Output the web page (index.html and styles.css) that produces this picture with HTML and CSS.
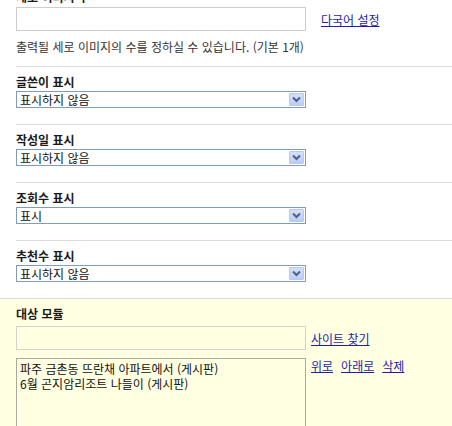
FILE: index.html
```html
<!DOCTYPE html>
<html lang="ko">
  <head>
    <meta charset="UTF-8" />
    <meta name="viewport" content="width=device-width, initial-scale=1.0" />
    <title>모듈 설정</title>
    <link rel="stylesheet" href="styles.css">
  </head>

  <body>
    <div class="options">
      <div class="row row-first">
        <div class="label">세로 이미지 수</div>
        <div class="field-line">
          <input type="text" class="text-input" />
          <a href="#" class="lang-link">다국어 설정</a>
        </div>
        <p class="desc">출력될 세로 이미지의 수를 정하실 수 있습니다. (기본 1개)</p>
      </div>

      <div class="row">
        <div class="label">글쓴이 표시</div>
        <div class="select-box">
          <span class="select-value">표시하지 않음</span>
          <span class="select-btn">
            <svg width="9" height="7" viewBox="0 0 9 7"><path d="M1 1.5 L4.5 5 L8 1.5" fill="none" stroke="#4d6185" stroke-width="2" /></svg>
          </span>
        </div>
      </div>

      <div class="row">
        <div class="label">작성일 표시</div>
        <div class="select-box">
          <span class="select-value">표시하지 않음</span>
          <span class="select-btn">
            <svg width="9" height="7" viewBox="0 0 9 7"><path d="M1 1.5 L4.5 5 L8 1.5" fill="none" stroke="#4d6185" stroke-width="2" /></svg>
          </span>
        </div>
      </div>

      <div class="row">
        <div class="label">조회수 표시</div>
        <div class="select-box">
          <span class="select-value">표시</span>
          <span class="select-btn">
            <svg width="9" height="7" viewBox="0 0 9 7"><path d="M1 1.5 L4.5 5 L8 1.5" fill="none" stroke="#4d6185" stroke-width="2" /></svg>
          </span>
        </div>
      </div>

      <div class="row">
        <div class="label">추천수 표시</div>
        <div class="select-box">
          <span class="select-value">표시하지 않음</span>
          <span class="select-btn">
            <svg width="9" height="7" viewBox="0 0 9 7"><path d="M1 1.5 L4.5 5 L8 1.5" fill="none" stroke="#4d6185" stroke-width="2" /></svg>
          </span>
        </div>
      </div>

      <!-- 대상 모듈 -->
      <div class="row row-module">
        <div class="label">대상 모듈</div>
        <div class="field-line">
          <input type="text" class="text-input module-input" />
          <a href="#" class="side-link">사이트 찾기</a>
        </div>
        <div class="module-list-line">
          <div class="module-list">
            <div>파주 금촌동 뜨란채 아파트에서 (게시판)</div>
            <div>6월 곤지암리조트 나들이 (게시판)</div>
          </div>
          <div class="list-actions">
            <a href="#">위로</a>
            <a href="#">아래로</a>
            <a href="#">삭제</a>
          </div>
        </div>
      </div>
    </div>
  </body>
</html>
```

FILE: styles.css
```css
body {
  margin: 0;
  background-color: #ffffff;
  font-family: "Noto Sans CJK KR", "Noto Sans", sans-serif;
  font-size: 12px;
  color: #222;
  overflow: hidden;
}

.options {
  margin-top: -10px;
}

.row {
  margin-left: 16px;
  padding: 8px 0 16px 0;
  border-top: 1px solid #dcdcdc;
}

.row-first {
  border-top: none;
  padding: 0 0 12px 0;
}

.label {
  font-weight: bold;
  line-height: 14px;
  height: 14px;
  color: #1a1a1a;
}

.row-first .label {
  margin-bottom: 3px;
}

.field-line {
  display: flex;
  align-items: center;
}

.text-input {
  box-sizing: border-box;
  width: 290px;
  height: 24px;
  margin: 0;
  border: 1px solid #cdcdcd;
  background-color: #fff;
  font-family: inherit;
  font-size: 12px;
}

a {
  color: #1d1da8;
  text-decoration: underline;
}

.lang-link {
  margin-left: 15px;
}

.desc {
  margin: 9px 0 0 0;
  line-height: 14px;
  color: #333;
}

.select-box {
  position: relative;
  box-sizing: border-box;
  width: 290px;
  height: 17px;
  margin-top: 2px;
  border: 1px solid #7f9db9;
  background-color: #fff;
}

.select-value {
  display: block;
  padding-left: 3px;
  line-height: 15px;
  color: #111;
}

.select-btn {
  position: absolute;
  top: 1px;
  right: 1px;
  box-sizing: border-box;
  width: 15px;
  height: 13px;
  border: 1px solid #b7c9f1;
  border-radius: 1px;
  background: linear-gradient(#d4e0fb, #bccdf6);
  display: flex;
  align-items: center;
  justify-content: center;
}

.row-module {
  box-sizing: border-box;
  margin-left: 0;
  padding-left: 16px;
  padding-bottom: 0;
  background-color: #ffffe1;
  height: 128px;
  overflow: hidden;
}

.module-input {
  margin-top: 5px;
  background-color: #ffffe1;
  border-color: #d2d2c8;
}

.side-link {
  margin-left: 5px;
  margin-top: 5px;
}

.module-list-line {
  display: flex;
  margin-top: 8px;
}

.module-list {
  box-sizing: border-box;
  width: 290px;
  height: 80px;
  padding: 2px 3px;
  border: 1px solid #a9a9a0;
  background-color: #ffffe1;
  line-height: 15px;
  color: #111;
}

.list-actions {
  display: flex;
  gap: 8px;
  margin-left: 5px;
  line-height: 15px;
}
```
